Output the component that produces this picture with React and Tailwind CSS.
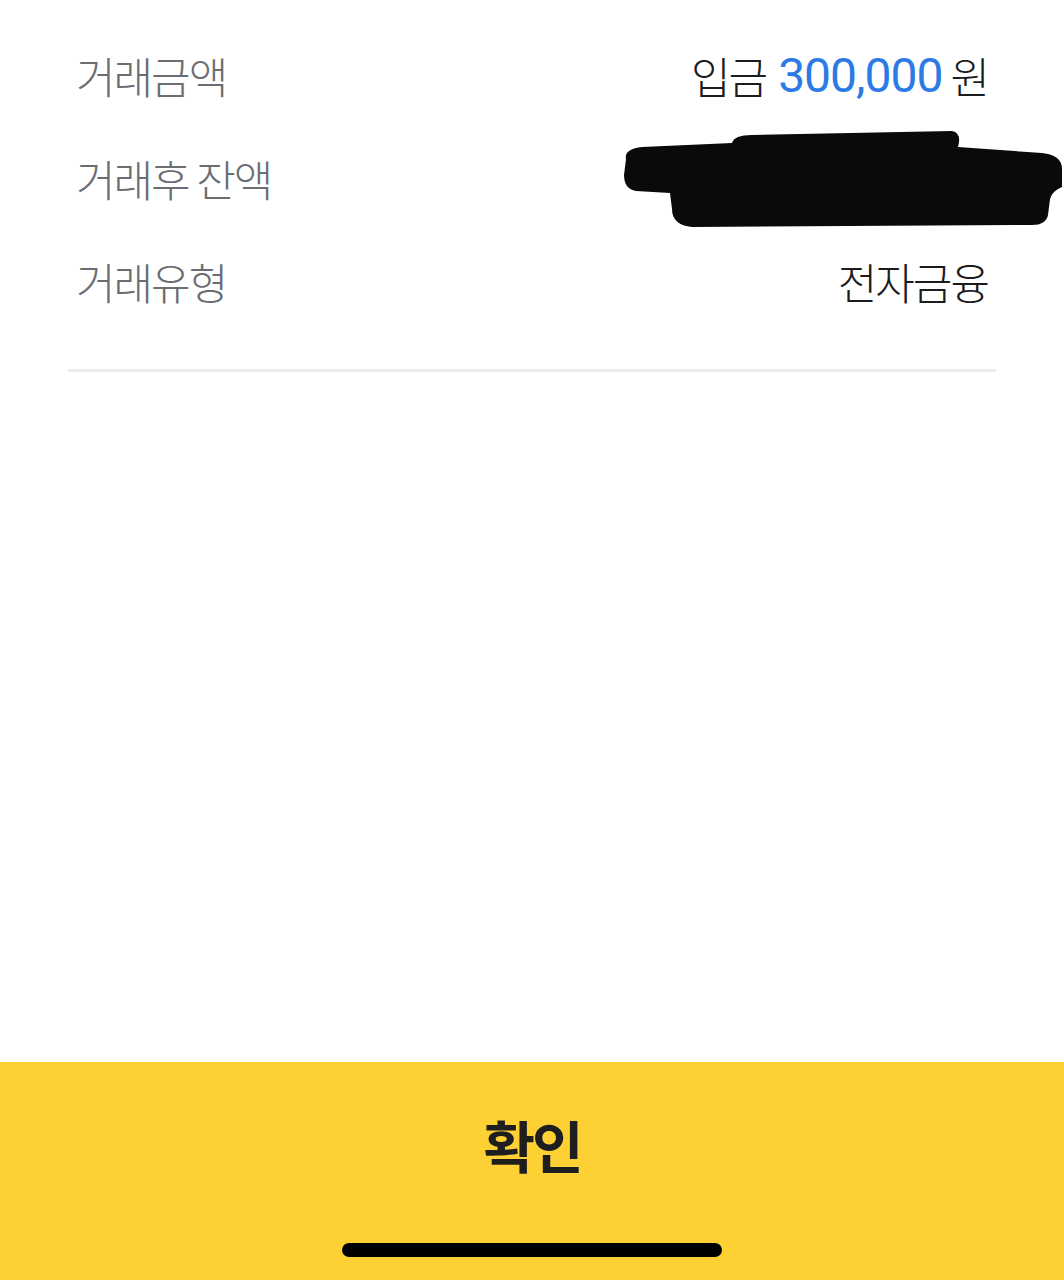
export default function App() {
  const kr = { fontFamily: '"Noto Sans CJK KR", "Noto Sans", sans-serif' };
  return (
    <div className="w-[1064px] h-[1280px] bg-white flex flex-col" style={kr}>
      <div className="flex-1 flex flex-col px-[76px] pt-[24px]">
        <div className="flex flex-col">
          <div className="h-[103px] flex items-center justify-between">
            <span className="text-[43px] font-light tracking-[-2px] text-[#6b6d72]">거래금액</span>
            <span className="flex items-center text-[43px] font-light tracking-[-2px] text-[#1c1c1e]">
              <span>입금</span>
              <span className="ml-[12px] text-[#2c7be5] tracking-[-1px] text-[48px] font-normal" style={{ fontFamily: 'Roboto, sans-serif' }}>300,000</span>
              <span className="ml-[8px]">원</span>
            </span>
          </div>
          <div className="h-[103px] flex items-center justify-between">
            <span className="text-[43px] font-light tracking-[-2px] text-[#6b6d72]">거래후 잔액</span>
            <svg className="-mr-[76px] w-[442px] h-[100px]" viewBox="0 0 442 100">
              <path d="M4 30 Q2 20 20 18 L110 14 Q112 6 130 6 L330 2 Q340 4 336 18 L420 24 Q440 26 440 40 L440 58 Q430 62 428 70 L426 86 Q424 96 410 96 L70 98 Q50 96 50 80 L48 64 L14 62 Q2 60 2 46 Z" fill="#0a0a0a" />
            </svg>
          </div>
          <div className="h-[103px] flex items-center justify-between">
            <span className="text-[43px] font-light tracking-[-2px] text-[#6b6d72]">거래유형</span>
            <span className="text-[43px] font-light tracking-[-2px] text-[#1c1c1e]">전자금융</span>
          </div>
        </div>
        <div className="mt-[36px] -mx-[8px] h-[3px] bg-[#ececee]" />
      </div>
      <div className="h-[218px] bg-[#fdd034] flex flex-col items-center">
        <div className="h-[164px] flex items-center justify-center">
          <span className="text-[56px] font-bold tracking-[-3px] text-[#1e1e1e]">확인</span>
        </div>
        <div className="mt-[17px] w-[380px] h-[14px] rounded-full bg-black" />
      </div>
    </div>
  );
}
